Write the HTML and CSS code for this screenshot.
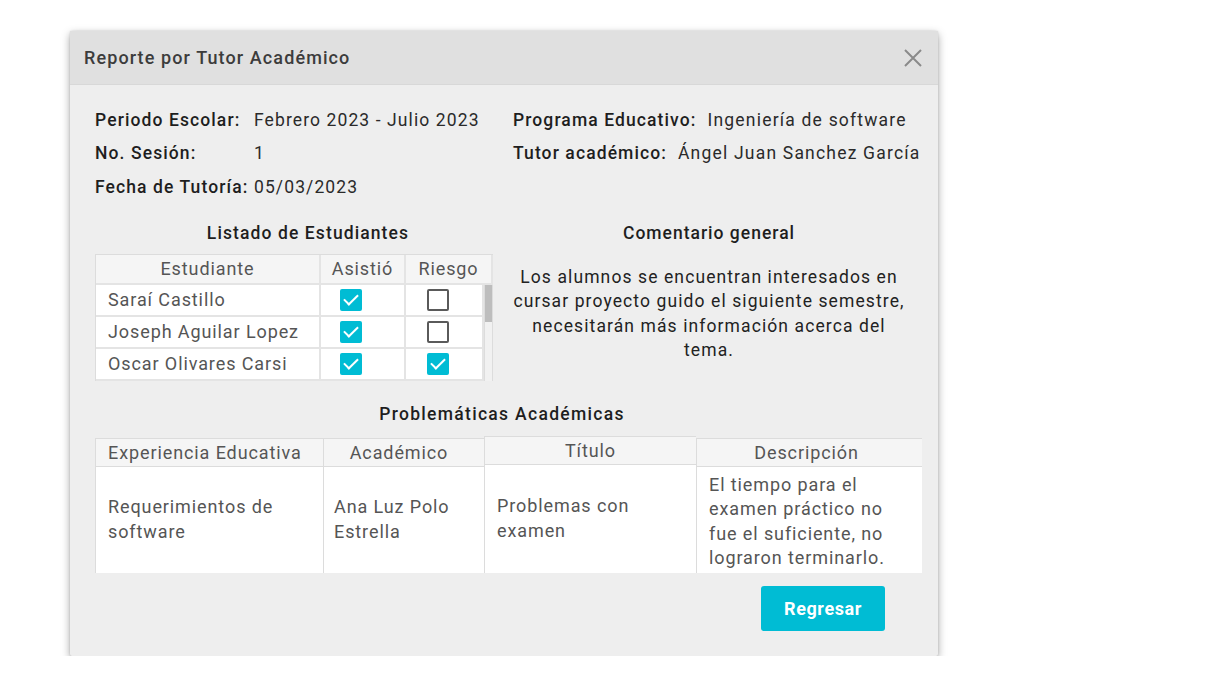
FILE: index.html
```html
<!DOCTYPE html>
<html lang="es">
<head>
<meta charset="utf-8">
<title>Reporte por Tutor Académico</title>
<link rel="stylesheet" href="styles.css">
</head>
<body>
<div class="modal">
  <div class="modal-header">
    <div class="modal-title">Reporte por Tutor Académico</div>
    <svg class="close" width="18" height="18" viewBox="0 0 18 18"><path d="M1 1 L17 17 M17 1 L1 17" stroke="#8a8a8a" stroke-width="2" fill="none"/></svg>
  </div>
  <div class="modal-body">
    <div class="info">
      <div class="info-left">
        <span class="lbl">Periodo Escolar:</span><span class="val">Febrero 2023 - Julio 2023</span>
        <span class="lbl">No. Sesión:</span><span class="val">1</span>
        <span class="lbl">Fecha de Tutoría:</span><span class="val">05/03/2023</span>
      </div>
      <div class="info-right">
        <div class="info-row"><span class="lbl">Programa Educativo:</span><span class="val">Ingeniería de software</span></div>
        <div class="info-row"><span class="lbl">Tutor académico:</span><span class="val">Ángel Juan Sanchez García</span></div>
      </div>
    </div>

    <div class="sections">
      <div class="students">
        <div class="sec-title students-title">Listado de Estudiantes</div>
        <div class="stable">
          <div class="shead">
            <div class="hc">Estudiante</div>
            <div class="hc">Asistió</div>
            <div class="hc">Riesgo</div>
          </div>
          <div class="sbody">
            <div class="srows">
              <div class="srow">
                <div class="sc name">Saraí Castillo</div>
                <div class="sc chk a"><span class="cb on"></span></div>
                <div class="sc chk r"><span class="cb"></span></div>
              </div>
              <div class="srow">
                <div class="sc name">Joseph Aguilar Lopez</div>
                <div class="sc chk a"><span class="cb on"></span></div>
                <div class="sc chk r"><span class="cb"></span></div>
              </div>
              <div class="srow">
                <div class="sc name">Oscar Olivares Carsi</div>
                <div class="sc chk a"><span class="cb on"></span></div>
                <div class="sc chk r"><span class="cb on"></span></div>
              </div>
            </div>
            <div class="scrollbar"><div class="thumb"></div></div>
          </div>
        </div>
      </div>
      <div class="comment">
        <div class="sec-title">Comentario general</div>
        <p class="comment-text">Los alumnos se encuentran interesados en cursar proyecto guido el siguiente semestre, necesitarán más información acerca del tema.</p>
      </div>
    </div>

    <div class="sec-title problems-title">Problemáticas Académicas</div>
    <div class="ptable">
      <div class="pcol c1">
        <div class="ph">Experiencia Educativa</div>
        <div class="pb">Requerimientos de software</div>
      </div>
      <div class="pcol c2">
        <div class="ph">Académico</div>
        <div class="pb">Ana Luz Polo Estrella</div>
      </div>
      <div class="pcol c3 shifted">
        <div class="ph">Título</div>
        <div class="pb">Problemas con examen</div>
      </div>
      <div class="pcol c4">
        <div class="ph">Descripción</div>
        <div class="pb">El tiempo para el examen práctico no fue el suficiente, no lograron terminarlo.</div>
      </div>
    </div>

    <div class="actions">
      <button class="btn">Regresar</button>
    </div>
  </div>
</div>
</body>
</html>
```

FILE: styles.css
```css
html, body {
  margin: 0;
  padding: 0;
  background: #ffffff;
  font-family: Roboto, "Liberation Sans", Arial, sans-serif;
}
body {
  padding: 31px 0 0 70px;
}
.modal {
  width: 868px;
  background: #eeeeee;
  box-shadow: 0 3px 8px rgba(0,0,0,0.35), 0 0 2px rgba(0,0,0,0.15);
  border-radius: 2px;
}
.modal-header {
  height: 54px;
  background: #e0e0e0;
  display: flex;
  align-items: center;
  justify-content: space-between;
  padding: 0 16px 0 14px;
  border-bottom: 1px solid #d8d8d8;
  box-sizing: border-box;
}
.modal-title {
  font-size: 18px;
  font-weight: 500;
  color: #3c3c3c;
  letter-spacing: 1.1px;
}
.close { display: block; }

.modal-body {
  padding: 18px 16px 25px 25px;
}
.info {
  display: flex;
  font-size: 17.5px;
  color: #1e1e1e;
  letter-spacing: 1.1px;
}
.info-left {
  width: 418px;
  display: grid;
  grid-template-columns: 159px auto;
  grid-auto-rows: 33.5px;
  align-items: center;
}
.info-right {
  display: flex;
  flex-direction: column;
}
.info-row {
  height: 33.5px;
  display: flex;
  align-items: center;
  gap: 11px;
}
.info-right .val { letter-spacing: 1.2px; }
.lbl { font-weight: 500; }
.val { font-weight: 400; color: #2a2a2a; }

.sections {
  display: flex;
  margin-top: 17px;
}
.sec-title {
  font-size: 17.5px;
  font-weight: 500;
  color: #1e1e1e;
  text-align: center;
  line-height: 24px;
  letter-spacing: 1px;
}
.students {
  width: 418px;
}
.students-title {
  margin-bottom: 9px;
  padding-left: 8px;
  letter-spacing: 1.1px;
}
.stable {
  width: 398px;
  border-left: 1px solid #dcdcdc;
  border-top: 1px solid #dcdcdc;
  background: #ffffff;
  font-size: 18px;
  color: #555555;
  letter-spacing: 0.9px;
  box-sizing: border-box;
}
.shead {
  display: grid;
  grid-template-columns: 225px 85px 87px;
  height: 28px;
  background: #f5f5f5;
  border-bottom: 2px solid #e4e4e4;
}
.hc {
  text-align: center;
  line-height: 28px;
  border-right: 2px solid #e4e4e4;
}
.sbody {
  display: flex;
  height: 96px;
  overflow: hidden;
}
.srows { width: 388px; }
.srow {
  display: grid;
  grid-template-columns: 225px 85px 78px;
  height: 32px;
  border-bottom: 2px solid #e4e4e4;
  box-sizing: border-box;
}
.sc {
  display: flex;
  align-items: center;
  border-right: 2px solid #e4e4e4;
}
.sc.name {
  padding-left: 12px;
}
.sc.chk.a { padding-left: 19px; }
.sc.chk.r { padding-left: 21px; }
.cb {
  width: 22px;
  height: 22px;
  box-sizing: border-box;
  border: 2px solid #5a5a5a;
  border-radius: 2px;
  background: #fff;
  position: relative;
}
.cb.on {
  border: none;
  background: #00bcd4;
}
.cb.on::after {
  content: "";
  position: absolute;
  left: 7px;
  top: 2.5px;
  width: 6px;
  height: 12px;
  border-right: 2px solid #fff;
  border-bottom: 2px solid #fff;
  transform: rotate(45deg);
}
.scrollbar {
  width: 9px;
  height: 96px;
  background: #f1f1f1;
  border-left: 1px solid #dcdcdc;
  border-right: 1px solid #dcdcdc;
  box-sizing: border-box;
}
.thumb {
  height: 37px;
  background: #bdbdbd;
}

.comment {
  width: 392px;
}
.comment-text {
  margin: 20px 0 0 0;
  font-size: 17.5px;
  line-height: 24.5px;
  color: #222222;
  text-align: center;
  letter-spacing: 1.1px;
}

.problems-title {
  margin-top: 21px;
  margin-bottom: 12px;
  padding-right: 13px;
  letter-spacing: 1.3px;
}
.ptable {
  display: flex;
  font-size: 18px;
  color: #555555;
  letter-spacing: 0.9px;
}
.pcol {
  display: flex;
  flex-direction: column;
  border-left: 1px solid #dcdcdc;
  border-top: 1px solid #dcdcdc;
  box-sizing: border-box;
}
.pcol.c1 { width: 228px; }
.pcol.c2 { width: 161px; }
.pcol.c3 { width: 212px; }
.pcol.c4 { width: 226px; }
.pcol.shifted { margin-top: -2px; }
.ph {
  height: 27px;
  line-height: 27px;
  text-align: center;
  background: #f5f5f5;
  border-bottom: 1px solid #dcdcdc;
  white-space: nowrap;
}
.pcol.c1 .ph { text-align: left; padding-left: 12px; }
.pcol.c2 .ph { padding-right: 10px; }
.pcol.c4 .ph { padding-right: 6px; }
.pb {
  height: 106px;
  background: #ffffff;
  display: flex;
  align-items: center;
  padding: 0 12px;
  line-height: 24.5px;
  overflow: hidden;
}
.pcol.c2 .pb { padding-left: 10px; }
.pcol.shifted .pb { height: 108px; }
.pcol.c4 .pb {
  align-items: flex-start;
  padding-top: 6px;
  box-sizing: border-box;
}

.actions {
  display: flex;
  justify-content: flex-end;
  margin-top: 13px;
  padding-right: 37px;
}
.btn {
  width: 124px;
  height: 45px;
  background: #00bcd4;
  color: #ffffff;
  border: none;
  border-radius: 3px;
  font-family: Roboto, "Liberation Sans", Arial, sans-serif;
  font-size: 18px;
  font-weight: 700;
  letter-spacing: 0.6px;
}
```
